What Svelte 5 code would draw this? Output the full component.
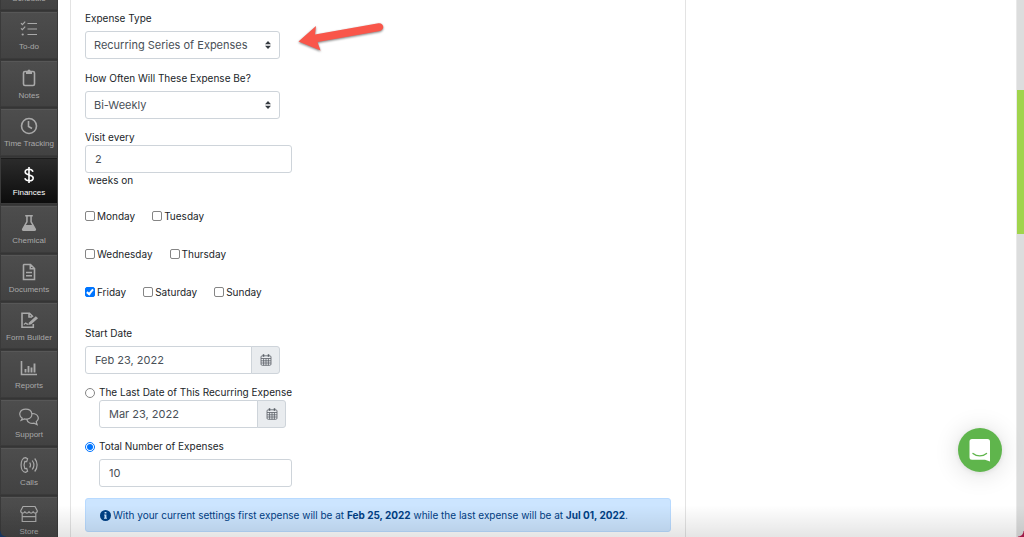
<script>
  const menu = [
    { name: 'Schedule', icon: 'calendar' },
    { name: 'To-do', icon: 'todo' },
    { name: 'Notes', icon: 'notes' },
    { name: 'Time Tracking', icon: 'clock' },
    { name: 'Finances', icon: 'dollar' },
    { name: 'Chemical', icon: 'flask' },
    { name: 'Documents', icon: 'document' },
    { name: 'Form Builder', icon: 'form' },
    { name: 'Reports', icon: 'chart' },
    { name: 'Support', icon: 'chat' },
    { name: 'Calls', icon: 'phone' },
    { name: 'Store', icon: 'store' }
  ];
  const active = 'Finances';

  let dayRows = $state([
    [{ name: 'Monday', on: false }, { name: 'Tuesday', on: false }],
    [{ name: 'Wednesday', on: false }, { name: 'Thursday', on: false }],
    [{ name: 'Friday', on: true }, { name: 'Saturday', on: false }, { name: 'Sunday', on: false }]
  ]);
  let expenseType = $state('Recurring Series of Expenses');
  let frequency = $state('Bi-Weekly');
  let every = $state('2');
  let startDate = $state('Feb 23, 2022');
  let lastDate = $state('Mar 23, 2022');
  let total = $state('10');
  let ending = $state('total');
</script>

{#snippet menuIcon(name)}
  <svg class="menu-icon" viewBox="0 0 20 20" aria-hidden="true">
    {#if name === 'todo'}
      <path d="M2 4.2l1.4 1.4L6.200 2.600M2 9.300l1.400 1.400 2.800-3M8.500 4.500h9.500M8.500 10h9.500M8.500 15.500h9.500" />
      <circle class="solid" cx="3.700" cy="15.500" r="1.100" />
    {:else if name === 'notes'}
      <rect class="bold" x="4.500" y="3.500" width="11" height="14" rx="1.500" />
      <path class="solid" d="M7 3h1.500a1.500 1.500 0 0 1 3 0H13v3H7z" />
    {:else if name === 'clock'}
      <circle class="bold" cx="10" cy="10" r="7.500" />
      <path class="bold" d="M9.500 5v5.500l3.500 2" />
    {:else if name === 'dollar'}
      <path class="bold" d="M10 2v16M14 6.800C13.400 5.100 12 4.300 10 4.300 7.600 4.300 6.200 5.400 6.200 7c0 4 8 1.900 8 5.900 0 1.800-1.600 2.800-4.100 2.800-2.200 0-3.700-.8-4.300-2.500" />
    {:else if name === 'flask'}
      <path class="solid" fill-rule="evenodd" d="M6.200 2h7.600v1.500h-1v5l4.100 7.200c.6 1.200 0 2.300-1.300 2.300H4.400c-1.300 0-1.900-1.100-1.300-2.300l4.100-7.200v-5h-1zM8.700 3.500v5.400L6.900 12h6.200l-1.800-3.100V3.500z" />
    {:else if name === 'document'}
      <path class="bold" d="M5 2.500h6.500l4 4v11H4.500V3zM11.300 2.700v4h4M7 10.500h6M7 13.800h6" />
    {:else if name === 'form'}
      <path class="bold" d="M11 17.200H3V3.200h7.500l3.500 3.500M10 3.500V7h3M14.300 14v3.200H11" />
      <path class="solid" d="M16.800 6.200l2.200 2.100-6.700 6-2.900.8.900-2.800z" />
      <path d="M4.800 14.500l2-1.500 1.400 1.300 1.300-.6" />
    {:else if name === 'chart'}
      <path class="bold" d="M2.500 3v13.500H18" />
      <path class="heavy" d="M6.500 14.500V11M9.500 14.500V8M12.500 14.500V9.500M15.500 14.500V5.500" />
    {:else if name === 'chat'}
      <path d="M3.300 11.300C-1.300 8 .8 2.200 6.700 2.200c7.500 0 8.200 8.500 1.600 9.900-1 .2-2.100.1-3-.2L2.200 13.300zM13.300 6.500c6 .2 7.800 5.500 3.900 8.200l.9 2.900-3.100-1.500c-3.300.8-6.600-.5-7.100-3.500" />
    {:else if name === 'phone'}
      <path d="M6.600 2.600C3.900 2.600 2.100 5.800 2.100 10s1.800 7.400 4.500 7.400l2-1.100-.9-3-1.900.2c-.9-2-.9-5 0-7l1.900.2.900-3zM10.700 7.500c1 1.500 1 3.500 0 5M13.200 5.500c2 2.600 2 6.400 0 9M15.700 3.500c3.200 3.700 3.200 9.300 0 13" />
    {:else if name === 'store'}
      <path d="M4 2.500h12l2.300 4.300c0 3-3.800 3-4.100.4-.3 2.600-3.900 2.600-4.200 0-.3 2.600-3.900 2.600-4.200 0-.3 2.600-4.100 2.600-4.100-.4zM3.200 9.500v8h13.600v-8M3.200 12.700h13.600" />
    {:else}
      <rect x="3" y="4" width="14" height="13" />
    {/if}
  </svg>
{/snippet}

{#snippet sorter()}
  <svg class="sorter" viewBox="0 0 6 8" aria-hidden="true"><path d="M3 0l3 3.300H0zM3 8L0 4.700h6z" /></svg>
{/snippet}

{#snippet calendar()}
  <svg viewBox="0 0 12 12" aria-hidden="true">
    <rect x="1" y="1.800" width="10" height="9.500" rx="1.200" />
    <path d="M1 4.500h10M1 6.800h10M1 9h10M3.600 4.500v6.800M6 4.500v6.800M8.400 4.500v6.800" />
    <path class="rings" d="M3.500.3v2.500M8.500.3v2.500" />
  </svg>
{/snippet}

<div class="app">
  <nav class="sidebar" aria-label="Main">
    <ul>
      {#each menu as item}
        <li>
          <a href="#{item.icon}" class:active={item.name === active}>
            {@render menuIcon(item.icon)}
            <span>{item.name}</span>
          </a>
        </li>
      {/each}
    </ul>
  </nav>

  <main>
    <form class="panel">
      <div class="group">
        <label for="type">Expense Type</label>
        <div class="with-note">
          <div class="select">
            <select id="type" bind:value={expenseType}>
              <option>Recurring Series of Expenses</option>
              <option>Single Expense</option>
            </select>
            {@render sorter()}
          </div>
          <svg class="arrow" viewBox="0 0 90 32" aria-hidden="true">
            <path d="M1.500 21.500L19 6l-1 8.500L81.500 3.300c5.500-.6 6.500 6.500 1.500 7.600L20.500 22l3 8.500z" />
          </svg>
        </div>
      </div>

      <div class="group">
        <label for="frequency">How Often Will These Expense Be?</label>
        <div class="select">
          <select id="frequency" bind:value={frequency}>
            <option>Weekly</option>
            <option>Bi-Weekly</option>
            <option>Monthly</option>
          </select>
          {@render sorter()}
        </div>
      </div>

      <div class="visit">
        <label for="every">Visit every</label>
        <input id="every" class="text" type="text" bind:value={every} />
        <span class="suffix">weeks on</span>
      </div>

      <div class="days">
        {#each dayRows as row}
          <div class="day-row">
            {#each row as day}
              <label class="tick"><input type="checkbox" bind:checked={day.on} />{day.name}</label>
            {/each}
          </div>
        {/each}
      </div>

      <div class="group">
        <label for="start">Start Date</label>
        <div class="date start">
          <input id="start" class="text" type="text" bind:value={startDate} />
          <button type="button" aria-label="Pick start date">{@render calendar()}</button>
        </div>
      </div>

      <div class="choice">
        <label class="tick"><input type="radio" name="ending" value="date" bind:group={ending} />The Last Date of This Recurring Expense</label>
        <div class="date last">
          <input class="text" type="text" aria-label="Last date" bind:value={lastDate} />
          <button type="button" aria-label="Pick last date">{@render calendar()}</button>
        </div>
      </div>

      <div class="choice spaced">
        <label class="tick"><input type="radio" name="ending" value="total" bind:group={ending} />Total Number of Expenses</label>
        <input class="text total" type="text" aria-label="Number of expenses" bind:value={total} />
      </div>

      <p class="notice">
        <svg viewBox="0 0 12 12" aria-hidden="true">
          <circle cx="6" cy="6" r="6" />
          <path d="M5 2.200h2v1.700H5zM4.500 5H7v3.500h.6v1H4.400v-1H5V6h-.5z" />
        </svg>
        <span>With your current settings first expense will be at <b>Feb 25, 2022</b> while the last expense will be at <b>Jul 01, 2022</b>.</span>
      </p>
    </form>
  </main>

  <div class="scrollbar" aria-hidden="true"><div class="thumb"></div></div>

  <button class="messenger" type="button" aria-label="Open chat">
    <svg viewBox="0 0 22 24" aria-hidden="true">
      <path class="bubble" d="M3 1h15.500a2.500 2.500 0 0 1 2.500 2.500V23.500l-5-1.700H3A2.500 2.500 0 0 1 .5 19.300V3.500A2.500 2.500 0 0 1 3 1z" />
      <path class="smile" d="M4 15.500c4 3.200 9.500 3.200 13.500 0" />
    </svg>
  </button>

  <div class="fade"></div>
</div>

<style>
  :global(body) {
    margin: 0;
    background: #fff;
  }

  .app {
    position: relative;
    display: flex;
    height: 100vh;
    overflow: hidden;
    font: 10px/16px Inter, sans-serif;
    color: #212529;
  }

  .app * {
    box-sizing: border-box;
  }

  .sidebar {
    flex: 0 0 58px;
    display: grid;
    background: #3a3a3a;
  }

  ul {
    display: grid;
    grid-auto-rows: minmax(48px, 1fr);
    margin: -37px 0 -7px;
    padding: 0;
    list-style: none;
  }

  li {
    display: grid;
    padding: 1px;
    border-bottom: 1px solid #353535;
  }

  a {
    display: flex;
    flex-direction: column;
    align-items: center;
    padding-top: 6px;
    gap: 1px;
    border-top: 1px solid #575757;
    background: linear-gradient(#4d4d4d, #424242);
    color: #a9a9a9;
    font: 8px/14px "Liberation Sans", Arial, sans-serif;
    white-space: nowrap;
    text-decoration: none;
  }

  a.active {
    border-top-color: #1c1c1c;
    background: linear-gradient(#2b2b2b, #0c0c0c);
    color: #fff;
  }

  .menu-icon {
    width: 20px;
    height: 20px;
    fill: none;
    stroke: currentColor;
    stroke-width: 1.2;
  }

  .menu-icon .bold {
    stroke-width: 1.6;
  }

  .menu-icon .heavy {
    stroke-width: 1.9;
  }

  .menu-icon .solid {
    fill: currentColor;
    stroke: none;
  }

  main {
    flex: 1;
    min-width: 0;
    padding: 0 12px;
  }

  .panel {
    max-width: 616px;
    min-height: 100vh;
    padding: 10px 14px 0;
    border: solid #e3e3e3;
    border-width: 0 1px;
  }

  label {
    display: block;
  }

  .group {
    display: grid;
    gap: 5px;
    margin-bottom: 11px;
  }

  .with-note {
    display: flex;
    gap: 17px;
  }

  .arrow {
    width: 90px;
    height: 32px;
    margin-top: -11px;
    fill: #f9564a;
    filter: drop-shadow(0 1px 1px rgb(0 0 0 / 50%));
  }

  .select {
    display: grid;
    align-items: center;
    width: 195px;
  }

  .select > :global(*) {
    grid-area: 1 / 1;
  }

  select,
  .text {
    width: 100%;
    height: 28px;
    margin: 0;
    padding: 0 9px;
    border: 1px solid #ced4da;
    border-radius: 3px;
    outline: 0;
    background: #fff;
    color: #495057;
    font: 11px/18px Inter, sans-serif;
  }

  select {
    appearance: none;
    padding: 0 8px;
  }

  .sorter {
    justify-self: end;
    width: 6px;
    height: 8px;
    margin-right: 9px;
    fill: #343a40;
    pointer-events: none;
  }

  .visit {
    display: grid;
    width: 207px;
    margin-bottom: 20px;
    line-height: 15px;
  }

  .suffix {
    padding-left: 3px;
  }

  .days {
    display: grid;
    gap: 22px;
    margin-bottom: 25px;
  }

  .day-row {
    display: flex;
    gap: 17px;
  }

  .tick {
    display: flex;
    align-items: center;
    gap: 2px;
  }

  .tick input {
    appearance: none;
    flex: none;
    display: grid;
    place-items: center;
    width: 10px;
    height: 10px;
    margin: 0;
    border: 1px solid #858585;
    border-radius: 2px;
    background: #fff;
  }

  .tick input[type='checkbox']:checked {
    border-color: #0075ff;
    background: #0075ff;
  }

  .tick input[type='checkbox']:checked::before {
    content: '';
    box-sizing: border-box;
    width: 4px;
    height: 7px;
    margin-bottom: 1px;
    border: solid #fff;
    border-width: 0 2px 2px 0;
    transform: rotate(40deg);
  }

  .tick input[type='radio'] {
    border-radius: 50%;
  }

  .tick input[type='radio']:checked {
    border-color: #0075ff;
  }

  .tick input[type='radio']:checked::before {
    content: '';
    width: 6px;
    height: 6px;
    border-radius: 50%;
    background: #0075ff;
  }

  .date {
    display: flex;
  }

  .start {
    width: 195px;
  }

  .last {
    width: 187px;
    margin-left: 14px;
  }

  .date .text {
    flex: 1;
    min-width: 0;
    border-radius: 3px 0 0 3px;
  }

  .date button {
    display: grid;
    place-items: center;
    width: 29px;
    margin-left: -1px;
    padding: 0;
    border: 1px solid #ced4da;
    border-radius: 0 3px 3px 0;
    background: #e9ecef;
  }

  .date svg {
    width: 12px;
    height: 12px;
    fill: none;
    stroke: #5a6067;
    stroke-width: 0.8;
  }

  .date .rings {
    stroke-width: 1.5;
  }

  .choice {
    display: grid;
    margin-bottom: 11px;
  }

  .choice .tick {
    gap: 4px;
    line-height: 15px;
  }

  .spaced {
    gap: 5px;
  }

  .total {
    width: 193px;
    margin-left: 14px;
  }

  .notice {
    display: flex;
    align-items: center;
    gap: 2px;
    margin: 0;
    padding: 8px 14px;
    border: 1px solid #b8daff;
    border-radius: 3px;
    background: #cce5ff;
    color: #004085;
  }

  .notice svg {
    flex: none;
    width: 11px;
    height: 11px;
    fill: #004085;
  }

  .notice path {
    fill: #cce5ff;
  }

  .scrollbar {
    flex: 0 0 8px;
    padding-top: 90px;
    border-left: 1px solid #e9e9e9;
    background: #dcdddd;
  }

  .thumb {
    height: 144px;
    background: #a0d44c;
  }

  .messenger {
    position: absolute;
    right: 22px;
    bottom: 65px;
    display: grid;
    place-items: center;
    width: 44px;
    height: 44px;
    padding: 0;
    border: 0;
    border-radius: 50%;
    background: #5fb54c;
    box-shadow: 0 1px 5px rgb(0 0 0 / 8%), 0 2px 26px rgb(0 0 0 / 14%);
  }

  .messenger svg {
    width: 22px;
    height: 24px;
  }

  .bubble {
    fill: #fff;
  }

  .smile {
    fill: none;
    stroke: #5fb54c;
    stroke-width: 1.4;
    stroke-linecap: round;
  }

  .fade {
    position: absolute;
    inset: auto 0 0;
    height: 32px;
    background:
      radial-gradient(circle at 100% 0, transparent 5px, #17355f 6px) left bottom / 6px 6px no-repeat,
      radial-gradient(circle at 0 0, transparent 5px, #a01846 6px) right bottom / 6px 6px no-repeat,
      linear-gradient(transparent, rgb(0 0 0 / 10%));
    pointer-events: none;
  }
</style>
